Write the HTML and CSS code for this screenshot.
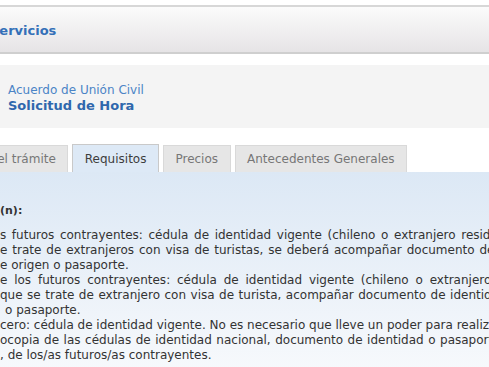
FILE: index.html
```html
<!DOCTYPE html>
<html lang="es">
<head>
<meta charset="utf-8">
<title>Solicitud de Hora</title>
<link rel="stylesheet" href="styles.css">
</head>
<body>
<div class="page">
  <div class="topbar"><h1 class="topbar-title">Servicios</h1></div>
  <div class="intro">
    <div class="intro-cat">Acuerdo de Unión Civil</div>
    <div class="intro-title">Solicitud de Hora</div>
  </div>
  <ul class="tabs">
    <li class="tab">Descripción del trámite</li>
    <li class="tab tab-active">Requisitos</li>
    <li class="tab">Precios</li>
    <li class="tab">Antecedentes Generales</li>
  </ul>
  <div class="panel">
    <p class="panel-heading">(n):</p>
    <div class="panel-text">
      <span class="line ws-3">s futuros contrayentes: cédula de identidad vigente (chileno o extranjero residente).</span>
      <span class="line ws-2">e trate de extranjeros con visa de turistas, se deberá acompañar documento de identidad</span>
      <span class="line">e origen o pasaporte.</span>
      <span class="line ws-4">e los futuros contrayentes: cédula de identidad vigente (chileno o extranjero residente).</span>
      <span class="line ws-1">que se trate de extranjero con visa de turista, acompañar documento de identidad</span>
      <span class="line line-in">o pasaporte.</span>
      <span class="line">cero: cédula de identidad vigente. No es necesario que lleve un poder para realizar el trámite,</span>
      <span class="line ws-1">ocopia de las cédulas de identidad nacional, documento de identidad o pasaporte,</span>
      <span class="line">, de los/as futuros/as contrayentes.</span>
    </div>
  </div>
</div>
</body>
</html>
```
FILE: styles.css
```css
html, body {
  margin: 0;
  padding: 0;
}
body {
  width: 489px;
  height: 367px;
  overflow: hidden;
  background: #ffffff;
  font-family: "DejaVu Sans", Verdana, sans-serif;
}
.page {
  width: 489px;
  overflow: hidden;
}
.topbar {
  margin-top: 5px;
  height: 45px;
  border-top: 2px solid #d7d7d7;
  border-bottom: 2px solid #cfcfcf;
  background: linear-gradient(#fbfbfb, #e6e4e6);
  display: flex;
  align-items: center;
}
.topbar-title {
  margin: 2px 0 0 -10px;
  font-size: 13px;
  font-weight: bold;
  color: #3470b8;
}
.intro {
  margin-top: 11px;
  height: 63px;
  box-sizing: border-box;
  padding: 18px 0 0 8px;
  background: #f4f4f4;
}
.intro-cat {
  font-size: 12px;
  line-height: 15px;
  color: #4b84c6;
}
.intro-title {
  font-size: 13px;
  line-height: 16px;
  font-weight: bold;
  color: #2f67ad;
}
.tabs {
  list-style: none;
  margin: 16px 0 0 -97px;
  padding: 0;
  display: flex;
  align-items: flex-end;
  gap: 4px;
  white-space: nowrap;
}
.tab {
  height: 27px;
  box-sizing: border-box;
  padding: 0 11.5px;
  border: 1px solid #d9d9d9;
  border-bottom: none;
  background: #e6e6e6;
  color: #777777;
  font-size: 12px;
  line-height: 26px;
}
.tab-active {
  height: 28px;
  line-height: 28px;
  background: #dde9f6;
  border-color: #c9c9c9;
  color: #3d3d3d;
}
.panel {
  height: 195px;
  box-sizing: border-box;
  padding-top: 31px;
  background: linear-gradient(#dce8f5, #f7f9fc 200px);
  color: #333333;
  font-size: 12px;
  line-height: 15px;
}
.panel-heading {
  margin: 0 0 10px;
  font-size: 11px;
  font-weight: bold;
}
.line {
  display: block;
  white-space: pre;
}
.line-in {
  padding-left: 5px;
}
.ws-1 {
  word-spacing: 0.7px;
}
.ws-2 {
  word-spacing: 1.1px;
}
.ws-3 {
  word-spacing: 1.8px;
}
.ws-4 {
  word-spacing: 3px;
}
```
